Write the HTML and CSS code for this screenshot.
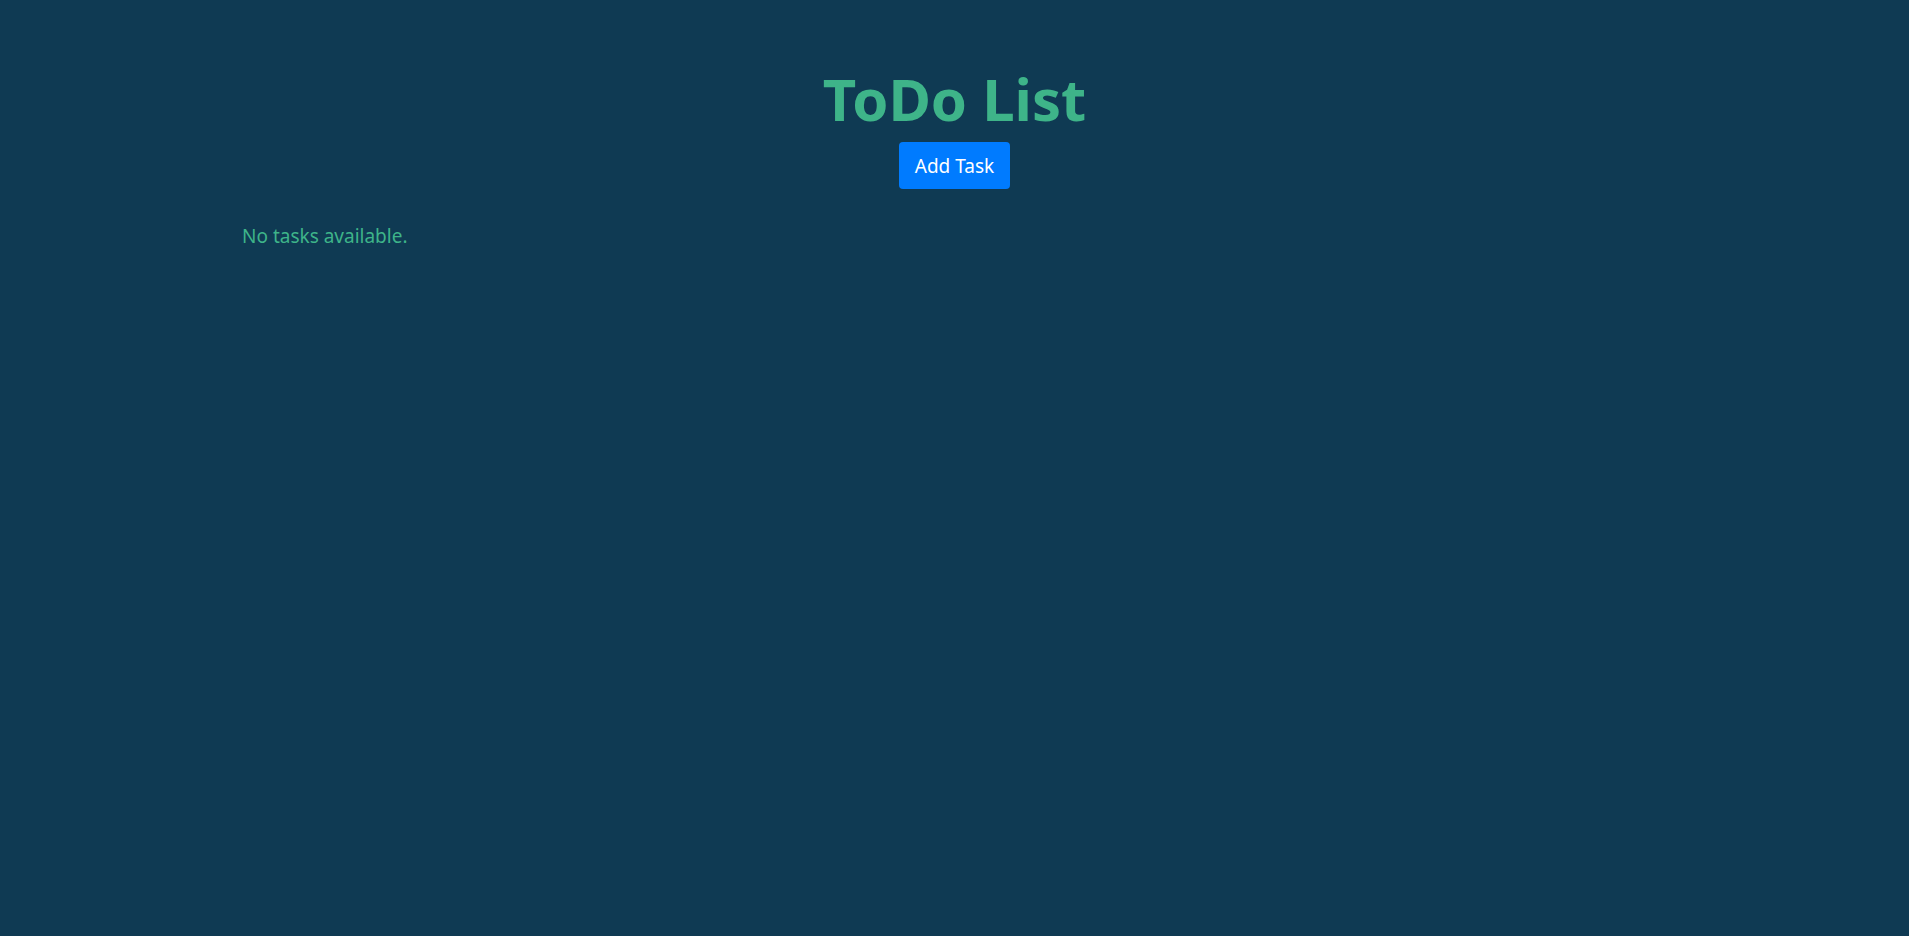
FILE: index.html
```html
<!DOCTYPE html>
<html lang="en">
<head>
<meta charset="utf-8">
<title>ToDo List</title>
<link rel="stylesheet" href="styles.css">
</head>
<body>
<main class="container">
<header class="header">
<h1 class="title">ToDo List</h1>
<button class="add-button" type="button">Add Task</button>
</header>
<p class="empty">No tasks available.</p>
</main>
</body>
</html>
```
FILE: styles.css
```css
* {
  box-sizing: border-box;
}

body {
  margin: 0;
  background: #0f3a53;
  color: #3eb489;
  font-family: "Segoe UI", "Noto Sans", sans-serif;
  font-size: 19px;
  line-height: 30px;
}

.container {
  max-width: 1425px;
  margin: 0 auto;
  padding: 64px 0;
}

.header {
  display: flex;
  flex-direction: column;
  align-items: center;
}

.title {
  margin: 0 0 8px;
  font-size: 58px;
  line-height: 70px;
  font-weight: 700;
}

.add-button {
  padding: 9px 16px 8px;
  border: 0;
  border-radius: 4px;
  background: #007bff;
  color: #fff;
  font: inherit;
  cursor: pointer;
}

.empty {
  margin: 32px 0 0;
}
```
